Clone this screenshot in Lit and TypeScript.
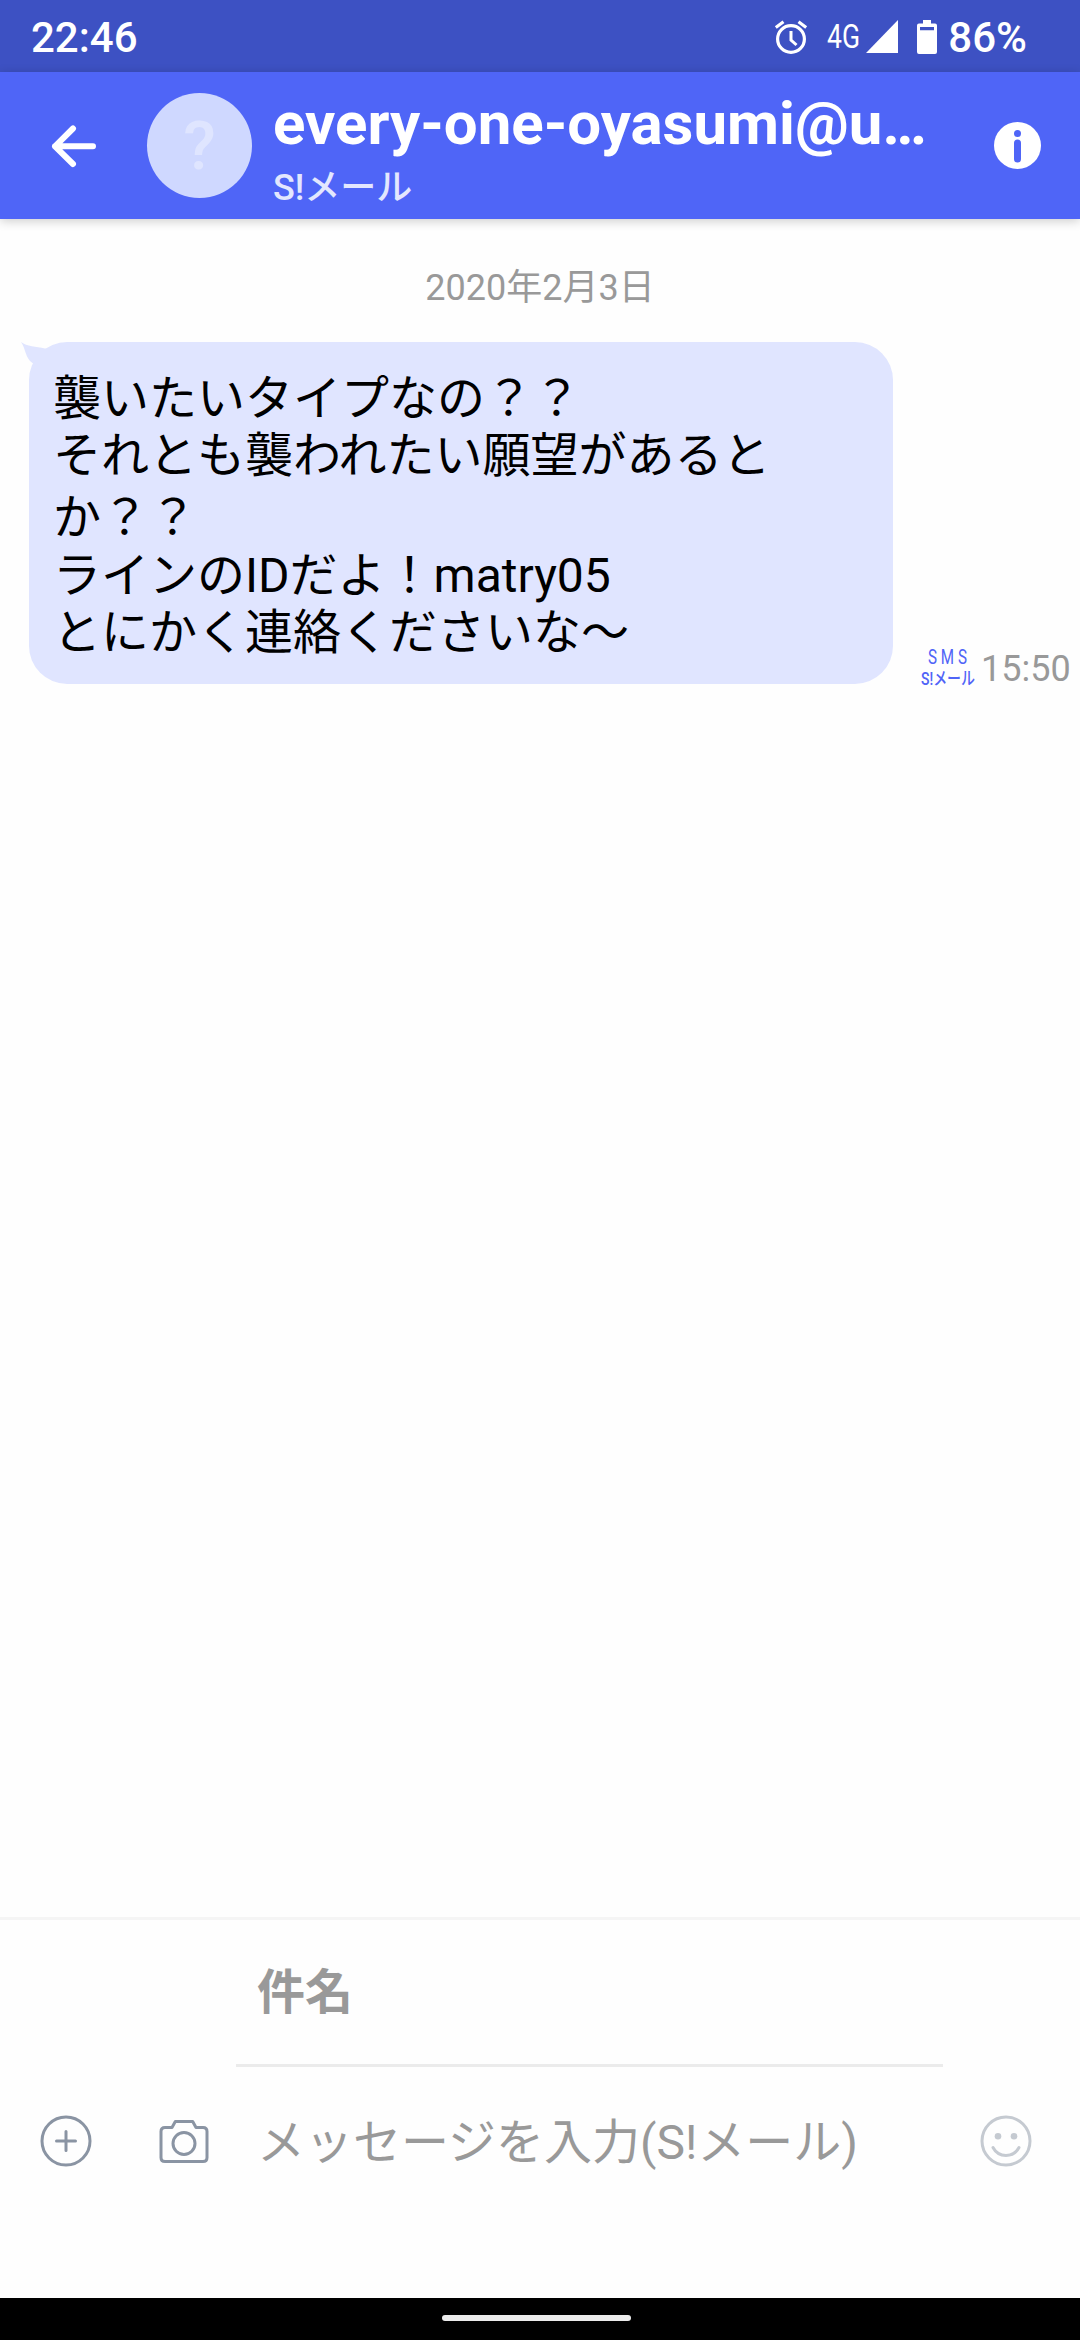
import { LitElement, html, css } from "lit";
import { customElement, property } from "lit/decorators.js";

const FONT = css`Roboto, "Noto Sans CJK JP", sans-serif`;

@customElement("status-bar")
class StatusBar extends LitElement {
  static styles = css`
    :host { display: flex; height: 72px; box-sizing: border-box; padding: 0 53px 0 31px; background: #3d51c3; color: #fff; font: 500 42px/76px ${FONT}; }
    .clock { flex: 1; }
    .alarm { width: 34px; height: 34px; margin: 20px 19px 0 0; }
    .net { width: 33px; height: 34px; margin: 20px 6px 0 0; font-weight: 400; font-size: 33px; }
    .signal { width: 32px; height: 33px; margin: 20px 19px 0 0; }
    .battery { width: 20px; height: 34px; margin: 20px 11px 0 0; }
    svg { display: block; overflow: visible; }
  `;
  render() {
    return html`
      <span class="clock">22:46</span>
      <svg class="alarm" viewBox="0 0 34 34" fill="none" stroke="#fff">
        <circle cx="17" cy="19" r="13.4" stroke-width="3.2" />
        <path d="M17 11v9l5.500 5" stroke-width="3" />
        <path d="M1.800 7.500L9.500 1.800M32.200 7.500L24.500 1.800" stroke-width="3.200" />
      </svg>
      <svg class="net" viewBox="0 0 33 34"><text x="0" y="28" fill="#fff" textLength="33" lengthAdjust="spacingAndGlyphs">4G</text></svg>
      <svg class="signal" viewBox="0 0 32 33"><path d="M32 0V33H0Z" fill="#fff" /></svg>
      <svg class="battery" viewBox="0 0 20 34"><path fill="#fff" fill-rule="evenodd" d="M6 0h8v3.500h4a2 2 0 0 1 2 2V32a2 2 0 0 1-2 2H2a2 2 0 0 1-2-2V5.500a2 2 0 0 1 2-2h4ZM3 7v3.200h14V7Z" /></svg>
      <span>86%</span>
    `;
  }
}

@customElement("chat-header")
class ChatHeader extends LitElement {
  @property() name = "";
  @property() kind = "";
  static styles = css`
    :host { display: flex; height: 147px; box-sizing: border-box; padding-left: 51px; padding-right: 39px; background: #4f65f7; color: #fff; font-family: ${FONT}; box-shadow: 0 2px 10px rgba(0, 0, 0, 0.2); position: relative; }
    svg { display: block; flex: none; }
    .back { width: 46px; height: 44px; margin-top: 52px; }
    .avatar { width: 105px; height: 105px; margin: 21px 21px 0 50px; border-radius: 50%; background: #cfd8ff; color: #dfe5ff; font-size: 67px; font-weight: 500; line-height: 106px; text-align: center; flex: none; }
    .who { flex: 1; min-width: 0; }
    .name { font-weight: 700; font-size: 60px; line-height: 70px; margin-top: 17px; white-space: nowrap; }
    .kind { font-weight: 500; font-size: 36px; line-height: 42px; margin-top: 8px; color: #e3e7fe; }
    .info { width: 47px; height: 47px; margin-top: 50px; }
  `;
  render() {
    return html`
      <svg class="back" viewBox="0 0 46 44" fill="none" stroke="#fff" stroke-width="6" stroke-linecap="round" stroke-linejoin="round"><path d="M22 4.500L4 22.300L22 40M4 22.300H42" /></svg>
      <div class="avatar">?</div>
      <div class="who">
        <div class="name">${this.name}</div>
        <div class="kind">${this.kind}</div>
      </div>
      <svg class="info" viewBox="0 0 47 47"><circle cx="23.500" cy="23.500" r="23.500" fill="#fff" /><circle cx="23.500" cy="11.500" r="3.500" fill="#4f65f7" /><path d="M23.500 21V37" stroke="#4f65f7" stroke-width="7" stroke-linecap="round" /></svg>
    `;
  }
}

@customElement("message-row")
class MessageRow extends LitElement {
  @property({ attribute: false }) lines: string[] = [];
  @property() time = "";
  static styles = css`
    :host { display: flex; align-items: flex-end; padding-left: 29px; font-family: ${FONT}; }
    .bubble { position: relative; box-sizing: border-box; width: 864px; height: 342px; padding: 28px 24px 0; border-radius: 38px; background: #e0e5ff; color: #000; font-size: 48px; line-height: 57px; }
    .tail { position: absolute; left: -8px; top: 0; width: 42px; height: 30px; }
    .line { white-space: nowrap; }
    .line:nth-of-type(3) { margin-top: 5px; }
    .line:nth-of-type(4) { margin-top: 1px; }
    .kinds { display: block; width: 54px; height: 40px; margin-left: 28px; margin-bottom: -2px; overflow: visible; fill: #5064f7; }
    .time { margin-left: 6px; font-size: 36px; line-height: 29px; color: #999; }
  `;
  render() {
    return html`
      <div class="bubble">
        <svg class="tail" viewBox="0 0 42 30"><path d="M0 0C6 5 15 4 24 6.500L40 10L20 30L11.500 21C4 16 5 7 0 0Z" fill="#e0e5ff" /></svg>
        ${this.lines.map((line) => html`<div class="line">${line}</div>`)}
      </div>
      <svg class="kinds" viewBox="0 0 54 40">
        <text x="9" y="18" font-size="19.500" transform="scale(0.78 1)" textLength="50">SMS</text>
        <text x="0" y="39" font-size="18" font-weight="500" textLength="54" lengthAdjust="spacingAndGlyphs">S!メール</text>
      </svg>
      <div class="time">${this.time}</div>
    `;
  }
}

@customElement("message-composer")
class MessageComposer extends LitElement {
  static styles = css`
    :host { display: block; box-sizing: border-box; height: 381px; border-top: 3px solid #f5f5f5; background: #fefefe; color: #999; font: 48px/56px ${FONT}; }
    .subject { box-sizing: border-box; width: 707px; height: 147px; margin-left: 236px; padding: 45px 0 0 21px; border-bottom: 3px solid #ebebeb; font-weight: 700; }
    .entry { display: flex; align-items: center; height: 148px; padding: 0 48px 0 40px; }
    svg { display: block; flex: none; fill: none; stroke: #8a94a3; stroke-width: 3; }
    .round { width: 52px; height: 52px; }
    .camera { width: 50px; height: 44px; margin: 0 48px 0 67px; }
    .body { flex: 1; white-space: nowrap; margin-top: 3px; }
    .smile { stroke: #c5cad1; }
    .eye { fill: #c5cad1; stroke: none; }
  `;
  render() {
    return html`
      <div class="subject">件名</div>
      <div class="entry">
        <svg class="round" viewBox="0 0 52 52"><circle cx="26" cy="26" r="24" /><path d="M26 16.500v19M16.500 26h19" stroke-linecap="round" /></svg>
        <svg class="camera" viewBox="0 0 50 44"><path d="M13 8.500L16.300 2.500H33.700L37 8.500H44Q48 8.500 48 12.500V38.500Q48 42.500 44 42.500H6Q2 42.500 2 38.500V12.500Q2 8.500 6 8.500Z" stroke-linejoin="round" /><circle cx="25" cy="24.500" r="11" /></svg>
        <div class="body">メッセージを入力(S!メール)</div>
        <svg class="round smile" viewBox="0 0 52 52"><circle cx="26" cy="26" r="24" /><circle class="eye" cx="18" cy="21.300" r="3.300" /><circle class="eye" cx="34" cy="21.300" r="3.300" /><path d="M13 32.500C18.500 43 33.500 43 39 32.500" stroke-linecap="round" /></svg>
      </div>
    `;
  }
}

@customElement("app-root")
class AppRoot extends LitElement {
  static styles = css`
    :host { display: flex; flex-direction: column; width: 1080px; height: 2340px; background: #fefefe; overflow: hidden; font-family: ${FONT}; }
    .thread { flex: 1; }
    .date { text-align: center; font-size: 36px; line-height: 42px; color: #999; margin: 48px 0 33px; }
    .nav { display: flex; justify-content: center; box-sizing: border-box; height: 42px; padding: 17px 7px 0 0; background: #000; }
    .pill { width: 189px; height: 6px; border-radius: 3px; background: #ebebeb; }
  `;
  private lines = [
    "襲いたいタイプなの？？",
    "それとも襲われたい願望があると",
    "か？？",
    "ラインのIDだよ！matry05",
    "とにかく連絡くださいな〜",
  ];
  render() {
    return html`
      <status-bar></status-bar>
      <chat-header name="every-one-oyasumi@u…" kind="S!メール"></chat-header>
      <div class="thread">
        <div class="date">2020年2月3日</div>
        <message-row .lines=${this.lines} time="15:50"></message-row>
      </div>
      <message-composer></message-composer>
      <div class="nav"><div class="pill"></div></div>
    `;
  }
}
